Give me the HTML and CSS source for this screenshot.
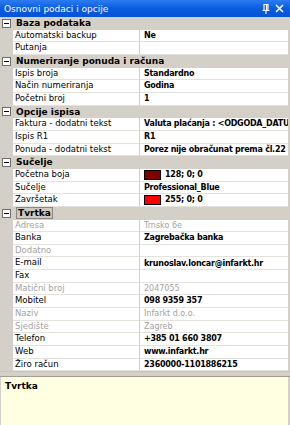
FILE: index.html
```html
<!DOCTYPE html>
<html lang="hr">
<head>
    <meta charset="UTF-8">
    <title>Osnovni podaci i opcije</title>
    <link rel="stylesheet" href="styles.css">
</head>
<body>
    <div class="panel">
        <div class="titlebar">
            <span class="title">Osnovni podaci i opcije</span>
            <span class="tools">
                <svg width="8" height="10" viewBox="0 0 8 10"><path d="M2 0.5h4v6h-4z M0.5 6.5h7 M4 6.5v3.5 M4.5 1v5" fill="none" stroke="#fff" stroke-width="1.2"/></svg>
                <svg width="9" height="9" viewBox="0 0 9 9"><path d="M1 1l7 7M8 1l-7 7" stroke="#fff" stroke-width="1.6"/></svg>
            </span>
        </div>

        <div class="grid">
            <div class="row cat"><span class="gutter"><i class="box"></i></span><span class="cat-label">Baza podataka</span></div>
            <div class="row"><span class="gutter"></span><span class="name">Automatski backup</span><span class="value">Ne</span></div>
            <div class="row"><span class="gutter"></span><span class="name">Putanja</span><span class="value"></span></div>

            <div class="row cat"><span class="gutter"><i class="box"></i></span><span class="cat-label">Numeriranje ponuda i računa</span></div>
            <div class="row"><span class="gutter"></span><span class="name">Ispis broja</span><span class="value">Standardno</span></div>
            <div class="row"><span class="gutter"></span><span class="name">Način numeriranja</span><span class="value">Godina</span></div>
            <div class="row"><span class="gutter"></span><span class="name">Početni broj</span><span class="value">1</span></div>

            <div class="row cat"><span class="gutter"><i class="box"></i></span><span class="cat-label">Opcije ispisa</span></div>
            <div class="row"><span class="gutter"></span><span class="name">Faktura - dodatni tekst</span><span class="value">Valuta plaćanja : &lt;ODGODA_DATUM&gt;</span></div>
            <div class="row"><span class="gutter"></span><span class="name">Ispis R1</span><span class="value">R1</span></div>
            <div class="row"><span class="gutter"></span><span class="name">Ponuda - dodatni tekst</span><span class="value">Porez nije obračunat prema čl.22 zakona</span></div>

            <div class="row cat"><span class="gutter"><i class="box"></i></span><span class="cat-label">Sučelje</span></div>
            <div class="row"><span class="gutter"></span><span class="name">Početna boja</span><span class="value"><i class="swatch dark"></i>128; 0; 0</span></div>
            <div class="row"><span class="gutter"></span><span class="name">Sučelje</span><span class="value">Professional_Blue</span></div>
            <div class="row"><span class="gutter"></span><span class="name">Završetak</span><span class="value"><i class="swatch red"></i>255; 0; 0</span></div>

            <div class="row cat"><span class="gutter"><i class="box"></i></span><span class="cat-label"><span class="selected">Tvrtka</span></span></div>
            <div class="row off"><span class="gutter"></span><span class="name">Adresa</span><span class="value">Trnsko 6e</span></div>
            <div class="row"><span class="gutter"></span><span class="name">Banka</span><span class="value">Zagrebačka banka</span></div>
            <div class="row off"><span class="gutter"></span><span class="name">Dodatno</span><span class="value"></span></div>
            <div class="row"><span class="gutter"></span><span class="name">E-mail</span><span class="value">krunoslav.loncar@infarkt.hr</span></div>
            <div class="row"><span class="gutter"></span><span class="name">Fax</span><span class="value"></span></div>
            <div class="row off"><span class="gutter"></span><span class="name">Matični broj</span><span class="value">2047055</span></div>
            <div class="row"><span class="gutter"></span><span class="name">Mobitel</span><span class="value">098 9359 357</span></div>
            <div class="row off"><span class="gutter"></span><span class="name">Naziv</span><span class="value">Infarkt d.o.o.</span></div>
            <div class="row off"><span class="gutter"></span><span class="name">Sjedište</span><span class="value">Zagreb</span></div>
            <div class="row"><span class="gutter"></span><span class="name">Telefon</span><span class="value">+385 01 660 3807</span></div>
            <div class="row"><span class="gutter"></span><span class="name">Web</span><span class="value">www.infarkt.hr</span></div>
            <div class="row"><span class="gutter"></span><span class="name">Žiro račun</span><span class="value">2360000-1101886215</span></div>
        </div>

        <div class="splitter"></div>

        <div class="desc">
            <div class="desc-title">Tvrtka</div>
        </div>
    </div>
</body>
</html>
```

FILE: styles.css
```css
* {
    margin: 0;
    padding: 0;
    box-sizing: border-box;
}

body {
    width: 290px;
    height: 425px;
    overflow: hidden;
    background: #d4d0c8;
    font-family: "DejaVu Sans", Tahoma, sans-serif;
    font-size: 8.5px;
    color: #000;
}

.panel {
    display: flex;
    flex-direction: column;
    height: 425px;
}

.titlebar {
    height: 17px;
    flex: none;
    display: flex;
    align-items: center;
    justify-content: space-between;
    padding: 0 6px 0 4px;
    background: linear-gradient(180deg, #2d7cf0 0%, #0a5ce0 50%, #0652d4 100%);
    color: #fff;
    font-size: 9px;
}

.tools {
    display: flex;
    align-items: center;
    gap: 5px;
}

.tools svg {
    display: block;
}

.grid {
    flex: none;
    display: flex;
    flex-direction: column;
    border-right: 2px solid #d4d0c8;
}

.row {
    height: 12.667px;
    display: grid;
    grid-template-columns: 13px 127px 1fr;
    background: #fff;
    overflow: hidden;
    white-space: nowrap;
}

.gutter {
    background: #d4d0c8;
    display: flex;
    align-items: center;
    justify-content: center;
}

.name {
    padding-left: 2px;
    border-right: 1px solid #d4d0c8;
    border-bottom: 1px solid #e4e2dc;
    line-height: 11.6px;
    overflow: hidden;
}

.value {
    padding-left: 4px;
    font-weight: bold;
    font-size: 8px;
    letter-spacing: -0.25px;
    border-bottom: 1px solid #e4e2dc;
    line-height: 11.6px;
    overflow: hidden;
    display: flex;
    align-items: center;
    gap: 4px;
}

.off .name,
.off .value {
    color: #a3a3a3;
    font-weight: normal;
    letter-spacing: 0;
}

.cat {
    background: #d4d0c8;
    grid-template-columns: 13px 1fr;
}

.cat-label {
    padding-left: 3px;
    font-weight: bold;
    font-size: 9px;
    line-height: 12.6px;
}

.selected {
    display: inline-block;
    line-height: 10px;
    padding: 0 1px;
    border: 1px solid #8a8780;
    background: #cdc9c0;
}

.box {
    width: 9px;
    height: 9px;
    border: 1px solid #6e6e6e;
    background: #fff;
    position: relative;
}

.box::after {
    content: "";
    position: absolute;
    left: 1px;
    top: 3px;
    width: 5px;
    height: 1px;
    background: #000;
}

.swatch {
    width: 17px;
    height: 10px;
    border: 1px solid #000;
    flex: none;
}

.swatch.dark {
    background: #800000;
}

.swatch.red {
    background: #ff0000;
}

.splitter {
    height: 6px;
    flex: none;
    background: #d4d0c8;
    border-top: 1px solid #c8c4bc;
    border-bottom: 1px solid #a09c94;
}

.desc {
    flex: 1;
    margin: 0 2px 0 1px;
    background: #ffffe1;
    padding: 4px 4px;
}

.desc-title {
    font-weight: bold;
    font-size: 9px;
}
```
